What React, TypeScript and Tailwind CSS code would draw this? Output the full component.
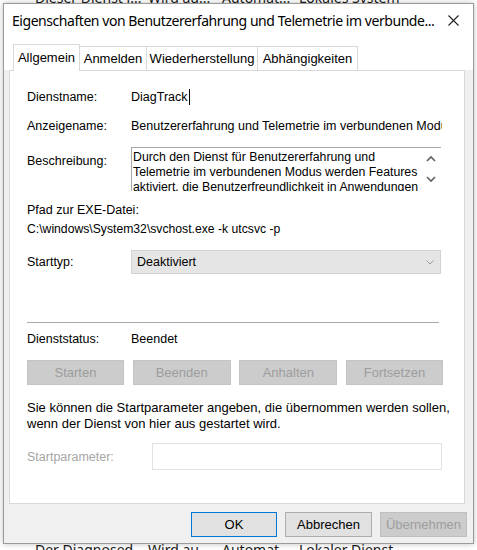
import React from "react";

const Chevron = ({ dir }: { dir: "up" | "down" }) => (
  <svg width="10" height="7" viewBox="0 0 10 7" className="block">
    {dir === "up" ? (
      <path d="M1 6 L5 2 L9 6" fill="none" stroke="#606060" strokeWidth="1.6" />
    ) : (
      <path d="M1 1 L5 5 L9 1" fill="none" stroke="#606060" strokeWidth="1.6" />
    )}
  </svg>
);

const BgRow = ({ cols }: { cols: string[] }) => (
  <div className="flex whitespace-nowrap font-['Noto_Sans',sans-serif] text-[14px] leading-[20px] text-[#1a1a1a]">
    <span className="ml-[35px] w-[113px]">{cols[0]}</span>
    <span className="w-[74px]">{cols[1]}</span>
    <span className="w-[77px]">{cols[2]}</span>
    <span>{cols[3]}</span>
  </div>
);

const DisabledBtn = ({ label, w }: { label: string; w: string }) => (
  <div className={`${w} h-[25px] bg-[#cccccc] border border-[#c4c4c4] flex items-center justify-center text-[#9d9d9d]`}>
    {label}
  </div>
);

export default function App() {
  return (
    <div className="relative w-[477px] h-[550px] overflow-hidden bg-white font-['Liberation_Sans',Arial,sans-serif] text-[12.5px] text-black">
      {/* list behind the dialog */}
      <div className="absolute left-0 top-[-12px] w-full">
        <BgRow cols={["Dieser Dienst i...", "Wird au...", "Automat...", "Lokales System"]} />
      </div>
      <div className="absolute left-0 top-[540px] w-full">
        <BgRow cols={["Der Diagnosed...", "Wird au...", "Automat...", "Lokaler Dienst"]} />
      </div>

      {/* dialog window */}
      <div className="absolute left-[3px] top-[3px] w-[471px] h-[541px] border border-[#9a9a9a] bg-[#f0f0f0] flex flex-col shadow-[0_0_6px_rgba(0,0,0,0.25)]">
        {/* title bar */}
        <div className="h-[33px] bg-white flex items-center justify-between pl-[8px] pr-[14px]">
          <span className="font-['Noto_Sans',sans-serif] text-[14px] tracking-[-0.45px] text-black whitespace-nowrap">
            Eigenschaften von Benutzererfahrung und Telemetrie im verbunde...
          </span>
          <svg width="11" height="11" viewBox="0 0 11 11">
            <path d="M0.5 0.5 L10.5 10.5 M10.5 0.5 L0.5 10.5" stroke="#222" strokeWidth="1.1" />
          </svg>
        </div>

        {/* tab strip */}
        <div className="bg-white text-[13px]">
          <div className="h-[7px]" />
          <div className="ml-[5px] flex items-end h-[26px] pl-[4px]">
            <div className="relative z-10 mb-[-1px] h-[27px] w-[67px] border border-b-0 border-[#d9d9d9] bg-white flex items-center justify-center pb-[1px]">
              Allgemein
            </div>
            <div className="h-[24px] w-[67px] border border-l-0 border-b-0 border-[#d9d9d9] bg-white flex items-center justify-center">
              Anmelden
            </div>
            <div className="h-[24px] w-[111px] border border-l-0 border-b-0 border-[#d9d9d9] bg-white flex items-center justify-center">
              Wiederherstellung
            </div>
            <div className="h-[24px] w-[100px] border border-l-0 border-b-0 border-[#d9d9d9] bg-white flex items-center justify-center">
              Abhängigkeiten
            </div>
          </div>
        </div>

        {/* tab panel */}
        <div className="ml-[5px] w-[456px] h-[434px] border border-[#d9d9d9] bg-white pl-[17px] pr-[21px] pt-[18px] flex flex-col leading-[16px]">
          <div className="flex">
            <span className="w-[104px]">Dienstname:</span>
            <span className="flex items-center">
              DiagTrack<span className="ml-[1px] inline-block w-px h-[16px] bg-black" />
            </span>
          </div>
          <div className="flex mt-[13px]">
            <span className="w-[104px] shrink-0">Anzeigename:</span>
            <span className="whitespace-nowrap overflow-hidden w-[311px]">
              Benutzererfahrung und Telemetrie im verbundenen Modus
            </span>
          </div>
          <div className="flex mt-[13px]">
            <span className="w-[104px] shrink-0 pt-[6px]">Beschreibung:</span>
            <div className="relative w-[310px] h-[44px] border-t border-l border-[#a8a8a8] overflow-hidden pl-[1px] pt-[2px] leading-[15px] text-[12.3px] whitespace-nowrap">
              <div>Durch den Dienst für Benutzererfahrung und</div>
              <div>Telemetrie im verbundenen Modus werden Features</div>
              <div>aktiviert, die Benutzerfreundlichkeit in Anwendungen</div>
              <div className="absolute right-[5px] top-[7px]">
                <Chevron dir="up" />
              </div>
              <div className="absolute right-[5px] top-[28px]">
                <Chevron dir="down" />
              </div>
            </div>
          </div>
          <div className="mt-[11px]">Pfad zur EXE-Datei:</div>
          <div className="mt-[3px] text-[12.2px]">C:\windows\System32\svchost.exe -k utcsvc -p</div>
          <div className="flex items-center mt-[13px]">
            <span className="w-[104px]">Starttyp:</span>
            <div className="w-[310px] h-[24px] bg-[#e5e5e5] border border-[#d2d2d2] flex items-center justify-between pl-[5px] pr-[6px]">
              <span>Deaktiviert</span>
              <svg width="8" height="5" viewBox="0 0 8 5">
                <path d="M0.5 0.5 L4 4 L7.5 0.5" fill="none" stroke="#9a9a9a" strokeWidth="1" />
              </svg>
            </div>
          </div>
          <div className="mt-[48px] mr-[4px] h-[2px] border-t border-[#a8a8a8] border-b border-b-white" />
          <div className="flex mt-[7px]">
            <span className="w-[104px]">Dienststatus:</span>
            <span>Beendet</span>
          </div>
          <div className="flex justify-between mt-[13px] text-[13px]">
            <DisabledBtn label="Starten" w="w-[97px]" />
            <DisabledBtn label="Beenden" w="w-[98px]" />
            <DisabledBtn label="Anhalten" w="w-[98px]" />
            <DisabledBtn label="Fortsetzen" w="w-[97px]" />
          </div>
          <div className="mt-[15px] whitespace-nowrap text-[13px]">
            <div>Sie können die Startparameter angeben, die übernommen werden sollen,</div>
            <div>wenn der Dienst von hier aus gestartet wird.</div>
          </div>
          <div className="flex items-center mt-[11px]">
            <span className="w-[125px] text-[#a6a6a6]">Startparameter:</span>
            <div className="w-[290px] h-[27px] border border-[#e2e2e2] bg-white" />
          </div>
        </div>

        {/* bottom buttons */}
        <div className="flex justify-end gap-[8px] mt-[8px] pr-[6px] text-[13px]">
          <div className="w-[86px] h-[25px] border border-[#0078d7] bg-[#e1e1e1] flex items-center justify-center">
            OK
          </div>
          <div className="w-[87px] h-[25px] border border-[#adadad] bg-[#e1e1e1] flex items-center justify-center">
            Abbrechen
          </div>
          <div className="w-[87px] h-[25px] border border-[#bfbfbf] bg-[#cccccc] flex items-center justify-center text-[#9d9d9d]">
            Übernehmen
          </div>
        </div>
      </div>
    </div>
  );
}
